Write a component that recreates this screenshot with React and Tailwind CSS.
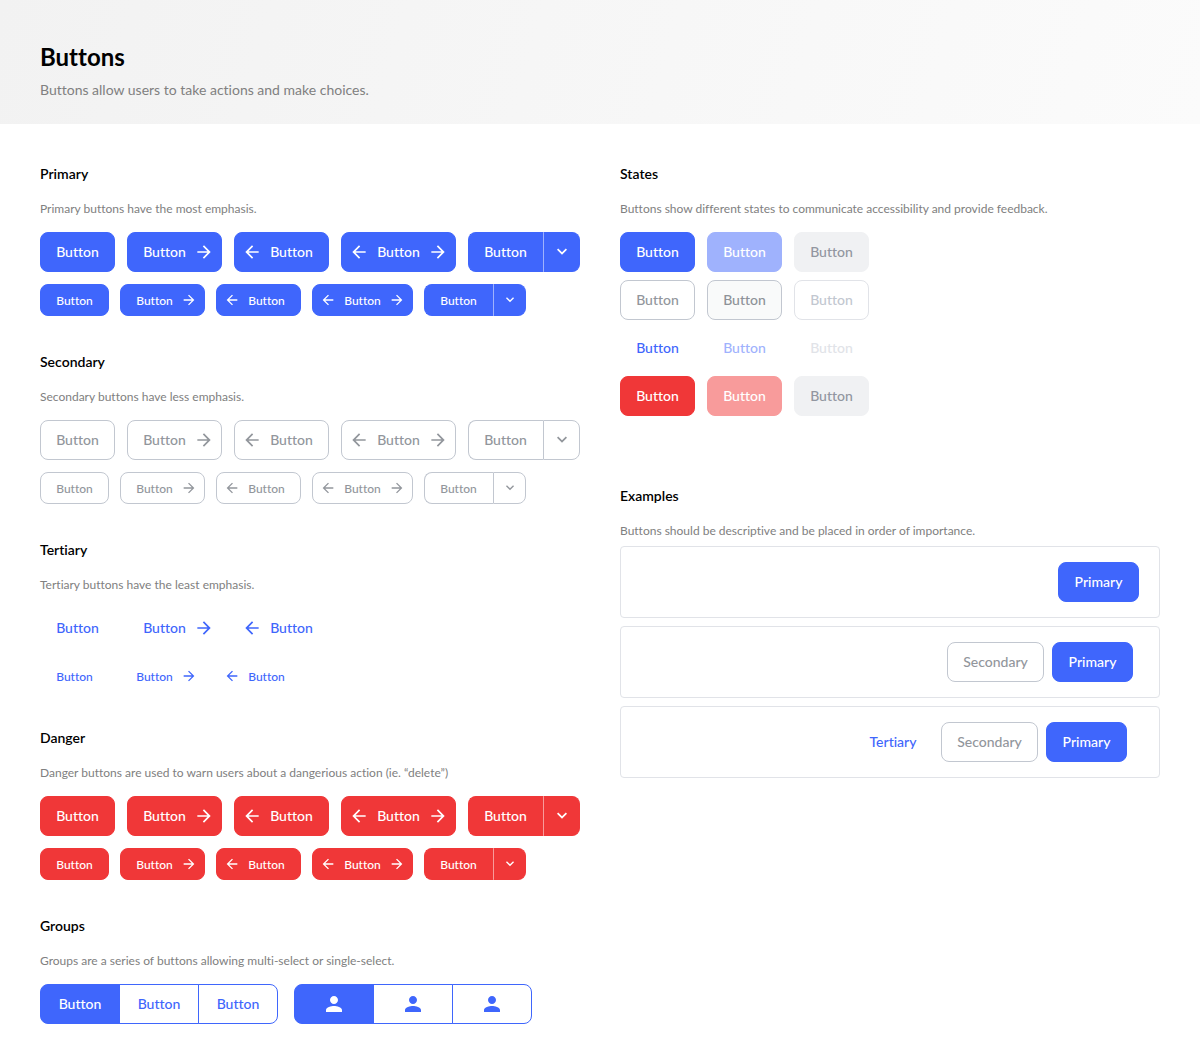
const ICONS = {
  right: 'M12 4l-1.41 1.41L16.17 11H4v2h12.17l-5.58 5.59L12 20l8-8z',
  left: 'M20 11H7.83l5.59-5.59L12 4l-8 8 8 8 1.41-1.41L7.83 13H20v-2z',
  down: 'M7.41 7.84L12 12.42l4.59-4.58L18 9.25l-6 6-6-6z',
  person:
    'M12 12c2.21 0 4-1.79 4-4s-1.79-4-4-4-4 1.79-4 4 1.79 4 4 4zm0 2c-2.67 0-8 1.34-8 4v2h16v-2c0-2.66-5.33-4-8-4z',
};

function Icon({ name, className }) {
  return (
    <svg viewBox="0 0 24 24" fill="currentColor" aria-hidden="true" className={`shrink-0 ${className}`}>
      <path d={ICONS[name]} />
    </svg>
  );
}

const VARIANTS = {
  primary: 'border-[#3f66fc] bg-[#3f66fc] text-white',
  primaryHover: 'border-[#9fb2fd] bg-[#9fb2fd] text-white',
  disabled: 'border-[#f0f1f3] bg-[#f0f1f3] text-[#9296a0]',
  secondary: 'border-[#c2c7d0] bg-white text-[#92969c]',
  secondaryHover: 'border-[#c2c7d0] bg-[#f9fafa] text-[#8e9298]',
  secondaryDisabled: 'border-[#e1e3e8] bg-white text-[#c2c7d0]',
  tertiary: 'border-transparent text-[#3f66fc]',
  tertiaryHover: 'border-transparent text-[#9fb2fd]',
  tertiaryDisabled: 'border-transparent text-[#e1e3e8]',
  danger: 'border-[#f03738] bg-[#f03738] text-white',
  dangerHover: 'border-[#f89b9b] bg-[#f89b9b] text-white',
};

const DIVIDERS = {
  primary: 'border-l-[#9fb2fd]',
  secondary: 'border-l-[#c2c7d0]',
  danger: 'border-l-[#f89b9b]',
};

const LABEL_WIDTHS = {
  Button: 'min-w-[43px]',
  Primary: 'min-w-[49px]',
  Secondary: 'min-w-[65px]',
  Tertiary: 'min-w-[48px]',
};

function Label({ small, text }) {
  return <span className={small ? 'min-w-[37px] pt-0.5' : LABEL_WIDTHS[text]}>{text}</span>;
}

function Button({ variant, small, left, right, disabled, children = 'Button' }) {
  const size = small ? 'h-8 text-xs' : 'h-10 text-sm';
  const icon = small ? 'size-4' : 'size-5';
  return (
    <button
      type="button"
      disabled={disabled}
      className={`flex items-center gap-2 rounded-lg border font-medium ${size} ${left ? 'pl-[7px]' : 'pl-[15px]'} ${right ? 'pr-[7px]' : 'pr-[15px]'} ${VARIANTS[variant]}`}
    >
      {left && <Icon name="left" className={icon} />}
      <Label small={small} text={children} />
      {right && <Icon name="right" className={icon} />}
    </button>
  );
}

function SplitButton({ variant, small }) {
  const size = small ? 'h-8 text-xs' : 'h-10 text-sm';
  return (
    <div className="flex font-medium">
      <button
        type="button"
        className={`flex items-center rounded-l-lg border border-r-0 pl-[15px] pr-4 ${size} ${VARIANTS[variant]}`}
      >
        <Label small={small} text="Button" />
      </button>
      <button
        type="button"
        aria-label="More options"
        className={`flex items-center rounded-r-lg border pl-2 pr-[7px] ${size} ${VARIANTS[variant]} ${DIVIDERS[variant]}`}
      >
        <Icon name="down" className={small ? 'size-4' : 'size-5'} />
      </button>
    </div>
  );
}

function Section({ title, text, children }) {
  return (
    <section>
      <h2 className="text-sm font-semibold text-black">{title}</h2>
      <p className="mt-[17px] text-xs text-[#808080]">{text}</p>
      {children}
    </section>
  );
}

function ButtonRows({ variant, full = true }) {
  return (
    <div className="mt-[15px] flex flex-col gap-3">
      {[false, true].map((small) => (
        <div key={String(small)} className={small ? 'flex gap-[11px]' : 'flex gap-3'}>
          <Button variant={variant} small={small} />
          <Button variant={variant} small={small} right />
          <Button variant={variant} small={small} left />
          {full && <Button variant={variant} small={small} left right />}
          {full && <SplitButton variant={variant} small={small} />}
        </div>
      ))}
    </div>
  );
}

function Group({ label, items }) {
  return (
    <div role="group" aria-label={label} className="flex">
      {items.map((item, i) => (
        <button
          key={i}
          type="button"
          aria-pressed={i === 0}
          aria-label={`${label} ${i + 1}`}
          className={`-ml-px flex h-10 w-20 items-center justify-center border border-[#3f66fc] text-sm font-medium first:ml-0 first:rounded-l-lg last:rounded-r-lg ${i === 0 ? 'bg-[#3f66fc] text-white' : 'bg-white text-[#3f66fc]'}`}
        >
          {item}
        </button>
      ))}
    </div>
  );
}

const STATES = [
  ['primary', 'primaryHover', 'disabled'],
  ['secondary', 'secondaryHover', 'secondaryDisabled'],
  ['tertiary', 'tertiaryHover', 'tertiaryDisabled'],
  ['danger', 'dangerHover', 'disabled'],
];

function Example({ className, children }) {
  return (
    <div className={`flex justify-end gap-2 rounded border border-[#e1e3e8] py-[15px] ${className}`}>{children}</div>
  );
}

export default function App() {
  const person = <Icon name="person" className="size-6" />;
  return (
    <div className="min-h-screen bg-white font-['Lato',sans-serif] [font-variant-ligatures:none]">
      <header className="bg-linear-[105deg] from-[#f2f2f2] to-[#fbfbfb] px-10 pt-[41px] pb-6">
        <h1 className="text-2xl font-bold text-black">Buttons</h1>
        <p className="mt-[7px] text-sm text-[#808080]">Buttons allow users to take actions and make choices.</p>
      </header>
      <main className="grid grid-cols-2 gap-10 px-10 py-10">
        <div className="flex flex-col gap-9">
          <Section title="Primary" text="Primary buttons have the most emphasis.">
            <ButtonRows variant="primary" />
          </Section>
          <Section title="Secondary" text="Secondary buttons have less emphasis.">
            <ButtonRows variant="secondary" />
          </Section>
          <Section title="Tertiary" text="Tertiary buttons have the least emphasis.">
            <ButtonRows variant="tertiary" full={false} />
          </Section>
          <Section title="Danger" text="Danger buttons are used to warn users about a dangerious action (ie. “delete”)">
            <ButtonRows variant="danger" />
          </Section>
          <Section title="Groups" text="Groups are a series of buttons allowing multi-select or single-select.">
            <div className="mt-[15px] flex gap-4">
              <Group label="Button" items={['Button', 'Button', 'Button']} />
              <Group label="Person" items={[person, person, person]} />
            </div>
          </Section>
        </div>
        <div className="flex flex-col gap-[70px]">
          <Section title="States" text="Buttons show different states to communicate accessibility and provide feedback.">
            <div className="mt-[15px] flex flex-col gap-2">
              {STATES.map((row) => (
                <div key={row[0]} className="flex gap-3">
                  {row.map((variant, i) => (
                    <Button key={i} variant={variant} disabled={i === 2} />
                  ))}
                </div>
              ))}
            </div>
          </Section>
          <Section title="Examples" text="Buttons should be descriptive and be placed in order of importance.">
            <div className="mt-[7px] flex flex-col gap-2">
              <Example className="pr-5">
                <Button variant="primary">Primary</Button>
              </Example>
              <Example className="pr-[26px]">
                <Button variant="secondary">Secondary</Button>
                <Button variant="primary">Primary</Button>
              </Example>
              <Example className="pr-8">
                <Button variant="tertiary">Tertiary</Button>
                <Button variant="secondary">Secondary</Button>
                <Button variant="primary">Primary</Button>
              </Example>
            </div>
          </Section>
        </div>
      </main>
    </div>
  );
}
